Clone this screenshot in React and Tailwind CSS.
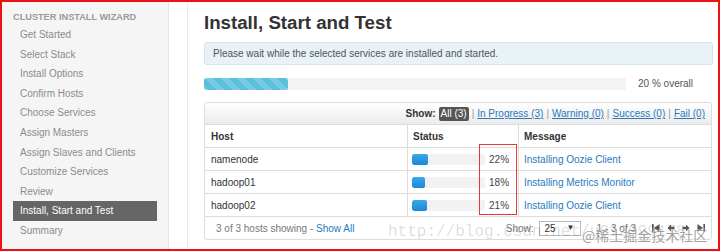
import React from 'react'

const steps = [
  'Get Started',
  'Select Stack',
  'Install Options',
  'Confirm Hosts',
  'Choose Services',
  'Assign Masters',
  'Assign Slaves and Clients',
  'Customize Services',
  'Review',
  'Install, Start and Test',
  'Summary',
]

const hosts = [
  { name: 'namenode', pct: 22, msg: 'Installing Oozie Client' },
  { name: 'hadoop01', pct: 18, msg: 'Installing Metrics Monitor' },
  { name: 'hadoop02', pct: 21, msg: 'Installing Oozie Client' },
]

function Sidebar() {
  return (
    <aside className="w-[167px] shrink-0 bg-[#f5f5f5] border-r border-[#e3e3e3] pt-[9px] pl-[11px] pr-[11px]">
      <div className="text-[9.2px] font-bold uppercase text-[#9a9a9a] leading-[12px] mb-[2px]">
        Cluster Install Wizard
      </div>
      {steps.map((s) => {
        const active = s === 'Install, Start and Test'
        return (
          <div
            key={s}
            className={
              active
                ? 'h-[19.6px] leading-[19.6px] pl-[7px] text-[10px] bg-[#666666] text-white'
                : 'h-[19.6px] leading-[19.6px] pl-[7px] text-[10px] text-[#8c8c8c]'
            }
          >
            {s}
          </div>
        )
      })}
    </aside>
  )
}

function Pager() {
  return (
    <div className="flex items-center gap-[7px] text-[#555]">
      <svg width="8" height="8" viewBox="0 0 8 8"><rect x="0" y="0" width="1.6" height="8" fill="#555" /><path d="M7.5 0 L2 4 L7.5 8 Z" fill="#555" /></svg>
      <svg width="8" height="8" viewBox="0 0 8 8"><path d="M0.5 4 L4 0.5 L4 2.8 L7.5 2.8 L7.5 5.2 L4 5.2 L4 7.5 Z" fill="#555" /></svg>
      <svg width="8" height="8" viewBox="0 0 8 8"><path d="M7.5 4 L4 0.5 L4 2.8 L0.5 2.8 L0.5 5.2 L4 5.2 L4 7.5 Z" fill="#555" /></svg>
      <svg width="8" height="8" viewBox="0 0 8 8"><path d="M0.5 0 L6 4 L0.5 8 Z" fill="#555" /><rect x="6.4" y="0" width="1.6" height="8" fill="#555" /></svg>
    </div>
  )
}

function HostTable() {
  return (
    <div className="mt-[11px] w-[508px] border border-[#dddddd] rounded-[3px] overflow-hidden text-[10px]">
      {/* filter toolbar */}
      <div className="h-[22px] flex items-center justify-end pr-[6px] bg-[linear-gradient(#ffffff,#ebebeb)] border-b border-[#dddddd] text-[#999]">
        <span className="font-bold text-[#333] mr-[3px]">Show:</span>
        <span className="bg-[#555555] text-white rounded-[2px] px-[2px] leading-[14px]">All (3)</span>
        <span className="mx-[3px]">|</span>
        <span className="text-[#2a7ac0] underline">In Progress (3)</span>
        <span className="mx-[3px]">|</span>
        <span className="text-[#2a7ac0] underline">Warning (0)</span>
        <span className="mx-[3px]">|</span>
        <span className="text-[#2a7ac0] underline">Success (0)</span>
        <span className="mx-[3px]">|</span>
        <span className="text-[#2a7ac0] underline">Fail (0)</span>
      </div>
      {/* header */}
      <div className="h-[23px] flex items-center font-bold text-[#333] border-b border-[#dddddd]">
        <div className="w-[203px] pl-[6px] h-full flex items-center border-r border-[#dddddd]">Host</div>
        <div className="w-[111px] pl-[5px] h-full flex items-center border-r border-[#dddddd]">Status</div>
        <div className="flex-1 pl-[5px]">Message</div>
      </div>
      {hosts.map((h) => (
        <div key={h.name} className="h-[23px] flex items-center border-b border-[#dddddd] text-[#333]">
          <div className="w-[203px] pl-[6px] h-full flex items-center border-r border-[#dddddd]">{h.name}</div>
          <div className="w-[111px] pl-[4px] h-full flex items-center border-r border-[#dddddd]">
            <div className="w-[73px] h-[11px] bg-[#f2f2f2] rounded-[2px] overflow-hidden">
              <div
                className="h-full rounded-[2px] bg-[linear-gradient(#3aa8ea,#1a88d4)]"
                style={{ width: `${h.pct}%` }}
              />
            </div>
            <span className="ml-[4px] text-[#444]">{h.pct}%</span>
          </div>
          <div className="flex-1 pl-[5px] text-[#2a7ac0]">{h.msg}</div>
        </div>
      ))}
      {/* footer */}
      <div className="h-[22px] flex items-center text-[#777]">
        <div className="pl-[11px]">
          3 of 3 hosts showing - <span className="text-[#2a7ac0]">Show All</span>
        </div>
        <div className="ml-auto flex items-center pr-[6px]">
          <span>Show:</span>
          <div className="ml-[5px] w-[42px] h-[15px] border border-[#bbb] bg-white flex items-center justify-between px-[5px] text-[#333]">
            <span>25</span>
            <span className="text-[8px]">▼</span>
          </div>
          <span className="ml-[16px] mr-[16px]">1 - 3 of 3</span>
          <Pager />
        </div>
      </div>
    </div>
  )
}

export default function App() {
  return (
    <div className="relative w-[720px] h-[251px] border-2 border-[#ee1111] flex overflow-hidden bg-white font-['Liberation_Sans',Arial,sans-serif]">
      <Sidebar />
      <main className="ml-[18px] flex-1 border-l border-[#ececec] pl-[16px] pt-[10px]">
        <h1 className="text-[18.7px] leading-[22px] font-bold text-[#333]">Install, Start and Test</h1>
        <div className="mt-[8px] w-[509px] h-[23px] bg-[#e8f2f7] border border-[#d3e3ec] rounded-[3px] pl-[8px] flex items-center text-[10px] text-[#555]">
          Please wait while the selected services are installed and started.
        </div>
        <div className="mt-[11px] flex items-center">
          <div className="w-[422px] h-[12px] bg-[#f3f3f3] rounded-[2px] overflow-hidden">
            <div className="w-[20%] h-full rounded-[2px] bg-[#5bc0de] bg-[linear-gradient(45deg,rgba(255,255,255,.18)_25%,transparent_25%,transparent_50%,rgba(255,255,255,.18)_50%,rgba(255,255,255,.18)_75%,transparent_75%,transparent)] bg-[length:16px_16px]" />
          </div>
          <span className="ml-[12px] text-[10px] text-[#555]">20 % overall</span>
        </div>
        <HostTable />
      </main>

      {/* annotation box around the percentages */}
      <div className="absolute left-[477px] top-[142px] w-[38px] h-[71px] border border-[#e53935]" />

      {/* watermarks */}
      <div className="absolute left-[386px] top-[218px] font-['Liberation_Mono',monospace] text-[16px] text-black/15 whitespace-nowrap pointer-events-none">
        http://blog.csdn.net/u012099178
      </div>
      <div className="absolute left-[580px] top-[224px] font-['Noto_Sans_CJK_SC',sans-serif] text-[14px] leading-[18px] text-[#8a8a8a]/80 whitespace-nowrap pointer-events-none [text-shadow:0_0_2px_#fff]">
        @稀土掘金技术社区
      </div>
    </div>
  )
}
